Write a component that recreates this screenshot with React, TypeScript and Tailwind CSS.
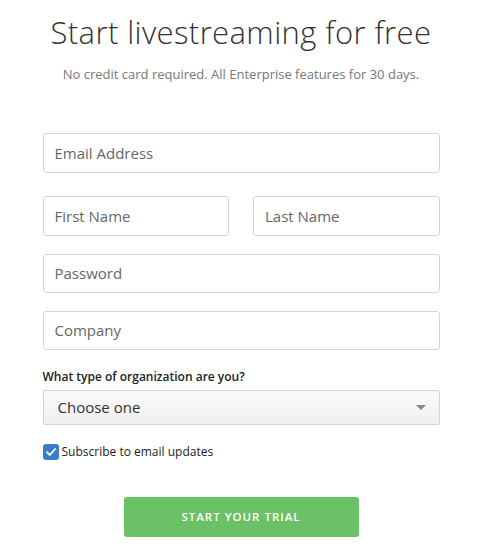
import React from "react";

export default function App() {
  const font = { fontFamily: "'Open Sans', Lato, sans-serif" };
  return (
    <div className="w-[482px] h-[557px] bg-white" style={font}>
      <div className="pt-[12px] text-center">
        <h1 className="text-[31px] leading-[40px] font-light text-[#333] tracking-[0.4px]">
          Start livestreaming for free
        </h1>
        <p className="mt-[13px] text-[13px] leading-[18px] text-[#777]">
          No credit card required. All Enterprise features for 30 days.
        </p>
      </div>
      <div className="w-[397px] mx-auto mt-[50px] flex flex-col">
        <div className="h-[40px] border border-[#d4d4d4] rounded-[3px] flex items-center px-[11px] text-[15px] text-[#666]">
          Email Address
        </div>
        <div className="mt-[23px] flex gap-[24px]">
          <div className="flex-1 h-[40px] border border-[#d4d4d4] rounded-[3px] flex items-center px-[11px] text-[15px] text-[#666]">
            First Name
          </div>
          <div className="flex-1 h-[40px] border border-[#d4d4d4] rounded-[3px] flex items-center px-[11px] text-[15px] text-[#666]">
            Last Name
          </div>
        </div>
        <div className="mt-[18px] h-[39px] border border-[#d4d4d4] rounded-[3px] flex items-center px-[11px] text-[15px] text-[#666]">
          Password
        </div>
        <div className="mt-[18px] h-[39px] border border-[#d4d4d4] rounded-[3px] flex items-center px-[11px] text-[15px] text-[#666]">
          Company
        </div>
        <div className="mt-[19px] text-[12px] leading-[16px] font-semibold text-[#222]">
          What type of organization are you?
        </div>
        <div className="mt-[5px] h-[35px] border border-[#d4d4d4] rounded-[2px] bg-gradient-to-b from-[#fbfbfb] to-[#efefef] flex items-center justify-between pl-[14px] pr-[13px]">
          <span className="text-[15px] text-[#333]">Choose one</span>
          <svg width="10" height="6" viewBox="0 0 10 6">
            <path d="M0 0 H10 L5 5 Z" fill="#888" />
          </svg>
        </div>
        <div className="mt-[18px] flex items-center gap-[3px]">
          <div className="w-[16px] h-[16px] rounded-[3px] bg-[#3b7dc4] flex items-center justify-center">
            <svg width="12" height="12" viewBox="0 0 12 12">
              <path d="M2 6.2 L4.8 9 L10 3" stroke="#fff" strokeWidth="1.8" fill="none" strokeLinecap="round" strokeLinejoin="round" />
            </svg>
          </div>
          <span className="text-[12px] text-[#222]">Subscribe to email updates</span>
        </div>
        <div className="mt-[36px] flex justify-center">
          <button className="w-[235px] h-[40px] rounded-[3px] bg-[#6bc166] text-white text-[11.5px] font-semibold tracking-[1px]">
            START YOUR TRIAL
          </button>
        </div>
      </div>
    </div>
  );
}
